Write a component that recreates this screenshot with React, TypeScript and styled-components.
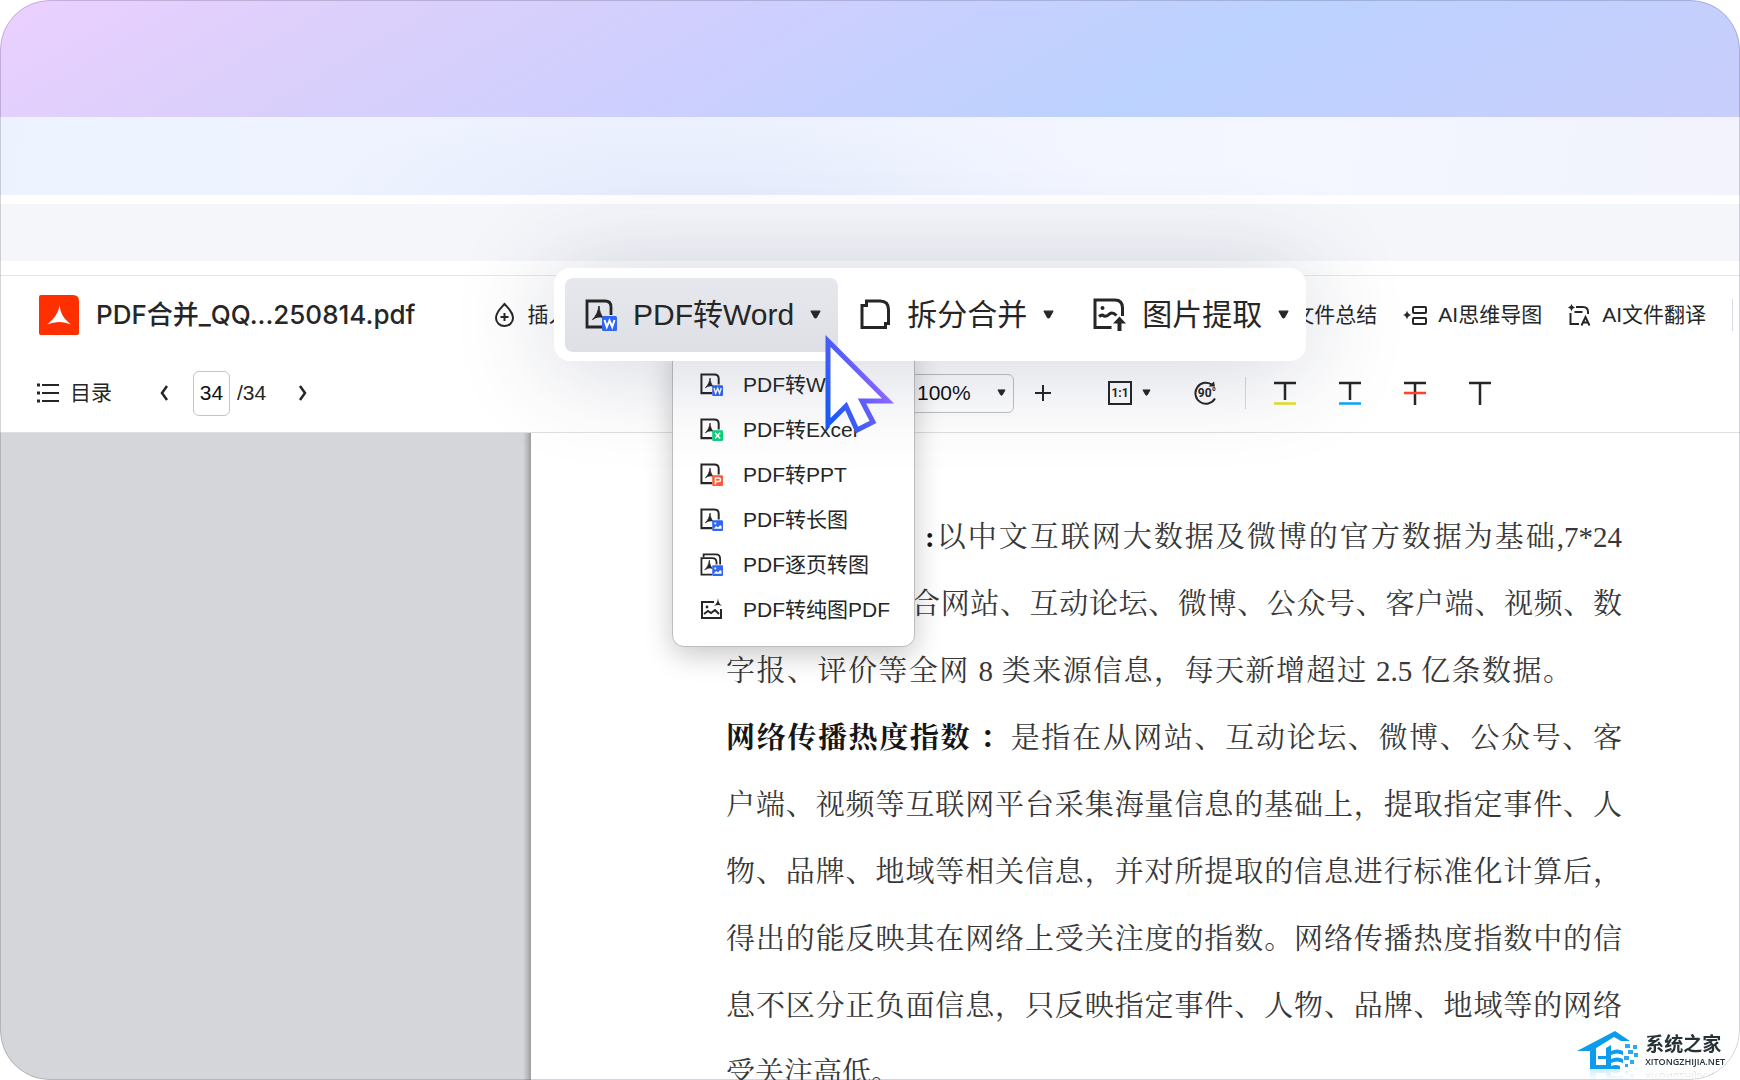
import React from "react";
import styled, { createGlobalStyle, css } from "styled-components";

const GlobalStyle = createGlobalStyle`
  *, *::before, *::after { box-sizing: border-box; }
  body { margin: 0; background: #fff; }
  button, input, select { font: inherit; color: inherit; }
`;

const sans = `"Liberation Sans", "Noto Sans CJK SC", sans-serif`;
const INK = "#262626";

const Frame = styled.div`
  position: relative;
  display: flex;
  flex-direction: column;
  height: 100vh;
  overflow: hidden;
  border-radius: 50px;
  background: #fff;
  color: ${INK};
  font-family: ${sans};
  font-size: 21px;
  line-height: 30px;

  &::after {
    content: "";
    position: absolute;
    inset: 0;
    border: 1px solid rgba(60, 60, 80, 0.22);
    border-radius: 50px;
    pointer-events: none;
  }
`;

const Sky = styled.div`
  flex: 0 0 117px;
  background: linear-gradient(150deg, #ebd0ff 0%, #dccffb 20%, #d0cffe 38%, #bcd2ff 67%, #c2d0fe 82%, #c9cefb 100%);
`;

const Band = styled.div`
  flex: 0 0 78px;
  background:
    radial-gradient(ellipse 400px 120px at 40% 110%, #e4ebfc, rgba(228, 235, 252, 0)),
    linear-gradient(100deg, #ecf3ff 0%, #f0f3ff 30%, #f4f7ff 75%, #f2f3fd 100%);
`;

const TabStrip = styled.div`
  flex: 0 0 57px;
  margin-top: 9px;
  background: #f5f6fa;
`;

const TitleBar = styled.header`
  display: flex;
  align-items: center;
  flex: 0 0 79px;
  margin-top: 14px;
  padding: 0 7px 0 39px;
  border-top: 1px solid #e6e6ea;
`;

const FileName = styled.h1`
  margin: 0 0 0 16px;
  font-family: Inter, "Noto Sans CJK SC", sans-serif;
  font-size: 26px;
  font-weight: 500;
  white-space: nowrap;
`;

const TextButton = styled.button`
  display: flex;
  align-items: center;
  gap: 10px;
  padding: 0;
  border: 0;
  background: none;
  white-space: nowrap;
`;

const InsertSlot = styled.div`
  margin-left: 79px;
`;

const AiTools = styled.nav`
  display: flex;
  align-items: center;
  gap: 26px;
  margin-left: auto;
`;

const Divider = styled.span`
  width: 1px;
  height: 32px;
  background: #d9dadf;
`;

const ToolBar = styled.div`
  display: flex;
  align-items: center;
  flex: 0 0 79px;
  padding-left: 36px;
  border-bottom: 1px solid #e0e0e2;
`;

const Pager = styled.div`
  display: flex;
  align-items: center;
  flex: 0 0 auto;
  margin-left: 47px;
`;

const PageInput = styled.input`
  width: 37px;
  height: 45px;
  margin: 0 7px 0 24px;
  padding: 0;
  border: 1px solid #c4c4c8;
  border-radius: 6px;
  background: #fff;
  color: #111;
  text-align: center;
`;

const PageTotal = styled.span`
  width: 56px;
`;

const ZoomBox = styled.div`
  position: relative;
  display: flex;
  align-items: center;
  margin-left: 560px;
`;

const ZoomSelect = styled.select`
  appearance: none;
  width: 146px;
  height: 39px;
  padding: 0 0 0 48px;
  border: 1px solid #bfc0c6;
  border-radius: 6px;
  background: transparent;
  color: #111;
`;

const SelectCaret = styled.span`
  position: absolute;
  right: 8px;
  display: flex;
  pointer-events: none;
`;

const ViewTools = styled.div<{ $gap: number }>`
  display: flex;
  align-items: center;
  margin-left: ${(p) => p.$gap}px;
`;

const IconButton = styled.button<{ $gap?: number }>`
  display: flex;
  align-items: center;
  gap: 10px;
  margin: 0 0 0 ${(p) => p.$gap ?? 0}px;
  padding: 0;
  border: 0;
  background: none;
`;

const MarkTools = styled.div`
  display: flex;
  align-items: center;
  gap: 43px;
  margin-left: 28px;
`;

const Workspace = styled.main`
  display: flex;
  flex: 1 1 0;
  min-height: 0;
`;

const Outline = styled.aside`
  flex: 0 0 531px;
  background: linear-gradient(to left, #9c9d9f 0, #bcbdc0 4px, #d5d6da 8px);
`;

const Paper = styled.article`
  flex: 1 1 0;
  min-width: 0;
  padding: 71px 118px 0 195px;
  color: #383838;
  font-family: "Liberation Serif", "Noto Serif CJK SC", "Noto Sans CJK SC", serif;
  font-size: 29px;
  font-weight: 400;
  line-height: 67px;
`;

const Line = styled.p<{ $from?: number; $to?: number; $loose?: boolean }>`
  margin: 0;
  padding: 0 ${(p) => p.$to ?? 0}px 0 ${(p) => p.$from ?? 0}px;
  white-space: nowrap;
  text-align-last: ${(p) => (p.$loose ? "left" : "justify")};

  b {
    color: #161616;
    font-weight: 700;
  }
`;

const floating = css`
  position: absolute;
  background: #fff;
`;

const Menu = styled.div`
  ${floating}
  top: 345px;
  left: 672px;
  display: flex;
  flex-direction: column;
  width: 243px;
  padding: 16px 0 14px;
  border: 1px solid #bdbdc0;
  border-radius: 12px;
  box-shadow: 0 8px 28px rgba(0, 0, 0, 0.22);
`;

const MenuItem = styled.button`
  display: flex;
  align-items: center;
  gap: 20px;
  height: 45px;
  padding: 0 0 0 27px;
  border: 0;
  background: none;
  white-space: nowrap;
`;

const Spotlight = styled.div`
  ${floating}
  top: 268px;
  left: 554px;
  display: flex;
  align-items: center;
  gap: 2px;
  height: 93px;
  padding-left: 11px;
  border-radius: 16px;
  box-shadow: 0 6px 100px rgba(40, 50, 90, 0.22);
`;

const SpotButton = styled.button<{ $active?: boolean }>`
  display: flex;
  align-items: center;
  gap: 16px;
  height: 74px;
  padding: 0 17px 0 20px;
  border: 0;
  border-radius: 8px;
  background: ${(p) => (p.$active ? "linear-gradient(#e7e8ed, #dfe0e6)" : "none")};
  font-size: 30px;
  white-space: nowrap;
`;

const Pointer = styled.svg`
  position: absolute;
  top: 330px;
  left: 820px;
`;

const Watermark = styled.div`
  position: absolute;
  right: 15px;
  bottom: 11px;
  display: flex;
  align-items: center;
  gap: 6px;
  -webkit-box-reflect: below 0 linear-gradient(transparent 70%, rgba(0, 0, 0, 0.2));
`;

const Brand = styled.div`
  display: flex;
  flex-direction: column;
  color: #263238;
`;

const BrandName = styled.strong`
  font-size: 19px;
  line-height: 24px;
`;

const BrandSite = styled.span`
  font-family: "Open Sans", sans-serif;
  font-size: 9px;
  font-weight: 600;
  line-height: 10px;
`;

const Caret = ({ size = 9 }: { size?: number }) => (
  <svg width={size} height={size - 1} viewBox="0 0 10 9" aria-hidden="true">
    <path d="M1 1h8L6 6.500Q5 7.800 4 6.500Z" fill={INK} stroke={INK} strokeWidth="1" strokeLinejoin="round" />
  </svg>
);

type Badge = "W" | "X" | "P" | "img";
const badgeColor: Record<Badge, string> = { W: "#2f66f6", X: "#0cd17c", P: "#fb5b3c", img: "#2f66f6" };

const PdfIcon = ({ size = 23, badge, stacked = false }: { size?: number; badge: Badge; stacked?: boolean }) => (
  <svg width={size} height={size} viewBox="0 0 32 32" fill="none" aria-hidden="true">
    {stacked ? (
      <g stroke={INK} strokeWidth="2.500">
        <path d="M5 6V2h17q6 0 6 6v8" />
        <path d="M17 30H2V7h15q6 0 6 6v3" />
      </g>
    ) : (
      <path d="M17 28H2V2h18q6 0 6 6v8" stroke={INK} strokeWidth="2.800" />
    )}
    <path
      transform={stacked ? "translate(-1 3)" : undefined}
      d="M14 7c.3 5 1.600 8.500 4 11.500-1.500-.5-2.500-.6-4-.5-2.200.1-4.300 1.100-6.500 2.600C11.500 16.500 13 13 14 7z"
      fill={INK}
      stroke={INK}
    />
    <rect x="17" y="17" width="15" height="15" rx="1.500" fill={badgeColor[badge]} />
    {badge === "W" && <path d="M19.500 21l2.300 7 2.700-6.500 2.700 6.500 2.300-7" stroke="#fff" strokeWidth="2" />}
    {badge === "X" && <path d="M21 20.500l7 8M28 20.500l-7 8" stroke="#fff" strokeWidth="2.200" />}
    {badge === "P" && <path d="M21.500 30v-9.200h4.300q2.700 0 2.700 2.500t-2.700 2.500h-4.300" stroke="#fff" strokeWidth="2" />}
    {badge === "img" && (
      <path d="M19 29l3.500-4 2.500 2 3-3.500 2 2V29zM20 20h2.500v2.500H20z" fill="#fff" />
    )}
  </svg>
);

const FlatPdfIcon = () => (
  <svg width="23" height="23" viewBox="0 0 23 23" fill="none" aria-hidden="true">
    <path d="M14 4H2v16h19v-9" stroke={INK} strokeWidth="2" />
    <path d="M4 16l4-3 3 2 4-3 4 4" stroke={INK} strokeWidth="2" />
    <circle cx="7" cy="9" r="1.400" fill={INK} />
    <path d="M18 0c.3 4 1.500 6 4 8-3-1.300-5-1.300-8 0 2.800-2.500 3.600-4.500 4-8z" fill={INK} />
  </svg>
);

const SplitIcon = () => (
  <svg width="31" height="31" viewBox="0 0 31 31" fill="none" aria-hidden="true">
    <path d="M6.500 2H20q8.500 0 8.500 8.500v14h-3v4H2V6.500h4.500z" stroke={INK} strokeWidth="3" />
  </svg>
);

const PictureIcon = () => (
  <svg width="33" height="33" viewBox="0 0 33 33" fill="none" aria-hidden="true">
    <path d="M18.500 29.500H2V2h20q7.500 0 7.500 8v8" stroke={INK} strokeWidth="3" />
    <path d="M6 18.500q3-2.500 5-.5 2.500 1 5.500-2 3-2.500 7 1.500" stroke={INK} strokeWidth="3" />
    <circle cx="9.500" cy="10" r="2" fill={INK} />
    <path d="M26.500 18.500l6.500 7h-4.500V33h-4v-7.500H20z" fill={INK} />
  </svg>
);

const FileLogo = () => (
  <svg width="41" height="40" viewBox="0 0 41 40" aria-hidden="true">
    <path d="M2 0h32q6 0 6 6v32q0 2-2 2H2q-2 0-2-2V2q0-2 2-2z" fill="#ff2f00" />
    <path d="M20.500 10c1 9 5 14.500 11.500 19.500-8-3.500-15-3.500-24 0C15 24 19.500 18 20.500 10z" fill="#fff" />
  </svg>
);

const DropIcon = () => (
  <svg width="23" height="26" viewBox="0 0 23 26" fill="none" stroke={INK} strokeWidth="2" aria-hidden="true">
    <path d="M10.500 2C14 6 19 10 19 16a8.500 8 0 0 1-17 0C2 10 7 6 10.500 2z" />
    <path d="M10.500 11v8M6.500 15h8" />
  </svg>
);

const MindMapIcon = () => (
  <svg width="25" height="21" viewBox="0 0 25 21" fill="none" aria-hidden="true">
    <path d="M4 5.500q.8 3.700 4.500 4.500-3.700.8-4.500 4.500-.8-3.700-4-4.500 3.200-.8 4-4.500z" fill={INK} />
    <g stroke={INK} strokeWidth="2">
      <rect x="10" y="2" width="13" height="6" rx="1" />
      <rect x="10" y="13" width="13" height="6" rx="1" />
    </g>
  </svg>
);

const TranslateIcon = () => (
  <svg width="24" height="23" viewBox="0 0 24 23" fill="none" aria-hidden="true">
    <path d="M3.500 0q.6 3 3.500 3.600-2.900.6-3.500 3.600Q2.900 4.200 0 3.600 2.900 3 3.500 0z" fill={INK} />
    <path d="M8 3h7q5 0 5 5v2M2.500 9v11H11M6.500 8h8" stroke={INK} strokeWidth="2" />
    <path d="M13.500 21.500L17.500 13l4 8.500M15 18.500h5" stroke={INK} strokeWidth="2" />
  </svg>
);

const ListIcon = () => (
  <svg width="24" height="20" viewBox="0 0 24 20" aria-hidden="true">
    <path d="M6 2h17M6 10h17M6 18h17" stroke={INK} strokeWidth="2" />
    <path d="M1 2h3M1 10h3M1 18h3" stroke={INK} strokeWidth="3" />
  </svg>
);

const Chevron = ({ right = false }: { right?: boolean }) => (
  <svg width="10" height="16" viewBox="0 0 10 16" fill="none" aria-hidden="true">
    <path d={right ? "M2 1l5 7-5 7" : "M8 1L3 8l5 7"} stroke={INK} strokeWidth="2.500" />
  </svg>
);

const PlusIcon = () => (
  <svg width="18" height="18" viewBox="0 0 18 18" aria-hidden="true">
    <path d="M9 1v16M1 9h16" stroke={INK} strokeWidth="2" />
  </svg>
);

const SvgText = styled.text`
  fill: ${INK};
  font-family: Roboto, sans-serif;
  font-weight: 700;
`;

const ActualSizeIcon = () => (
  <svg width="24" height="24" viewBox="0 0 24 24" fill="none" aria-hidden="true">
    <rect x="1" y="1" width="22" height="22" stroke={INK} strokeWidth="2" />
    <SvgText x="12" y="16" fontSize="12" textAnchor="middle">1:1</SvgText>
  </svg>
);

const RotateIcon = () => (
  <svg width="24" height="24" viewBox="0 0 24 24" fill="none" aria-hidden="true">
    <path d="M18.500 4A10.500 10.500 0 1 0 21 17.500" stroke={INK} strokeWidth="2" />
    <path d="M14.500 5.500h6.500l-1-5z" fill={INK} />
    <SvgText x="13" y="16" fontSize="12" textAnchor="middle">90°</SvgText>
  </svg>
);

const MarkIcon = ({ line, strike }: { line?: string; strike?: string }) => (
  <svg width="22" height="24" viewBox="0 0 22 24" aria-hidden="true">
    <path d={line ? "M0 2h22M11 2v17" : "M0 2h22M11 2v22"} stroke={INK} strokeWidth="2.500" />
    {line && <path d="M0 22.500h22" stroke={line} strokeWidth="2.500" />}
    {strike && <path d="M0 12h22" stroke={strike} strokeWidth="2.500" />}
  </svg>
);

const HouseLogo = () => (
  <svg width="62" height="38" viewBox="0 0 62 38" aria-hidden="true">
    <path d="M0 20L38 0l15 10h-9l-7-4-21 13-3 1z" fill="#0b9cec" />
    <path d="M13 20l6-3v17h10v-6h-8v-3h8v-8l5-3v6q6-3 12 0v4q-6-3-12 0v4q6-3 12 0v4q-6-3-12 0v3q5-2 9 0v3H13z" fill="#0b9cec" />
    <path d="M48 13h5v4h-5zM56 14h4v4h-4zM51 19h5v4h-5zM57 22h4v4h-4zM47 25h5v4h-5zM53 29h4v4h-4zM48 33h3v3h-3z" fill="#2aaaf0" />
  </svg>
);

const menuItems: { label: string; icon: React.ReactNode }[] = [
  { label: "PDF转Word", icon: <PdfIcon badge="W" /> },
  { label: "PDF转Excel", icon: <PdfIcon badge="X" /> },
  { label: "PDF转PPT", icon: <PdfIcon badge="P" /> },
  { label: "PDF转长图", icon: <PdfIcon badge="img" /> },
  { label: "PDF逐页转图", icon: <PdfIcon badge="img" stacked /> },
  { label: "PDF转纯图PDF", icon: <FlatPdfIcon /> },
];

export default function App() {
  return (
    <>
      <GlobalStyle />
      <Frame>
        <Sky />
        <Band />
        <TabStrip />
        <TitleBar>
          <FileLogo />
          <FileName>PDF合并_QQ...250814.pdf</FileName>
          <InsertSlot>
            <TextButton><DropIcon />插入</TextButton>
          </InsertSlot>
          <AiTools>
            <TextButton>AI文件总结</TextButton>
            <TextButton><MindMapIcon />AI思维导图</TextButton>
            <TextButton><TranslateIcon />AI文件翻译</TextButton>
            <Divider />
          </AiTools>
        </TitleBar>
        <ToolBar>
          <TextButton><ListIcon />目录</TextButton>
          <Pager>
            <IconButton aria-label="上一页"><Chevron /></IconButton>
            <PageInput aria-label="页码" defaultValue="34" />
            <PageTotal>/34</PageTotal>
            <IconButton $gap={5} aria-label="下一页"><Chevron right /></IconButton>
          </Pager>
          <ZoomBox>
            <ZoomSelect aria-label="缩放" defaultValue="100%">
              <option>100%</option>
            </ZoomSelect>
            <SelectCaret><Caret /></SelectCaret>
          </ZoomBox>
          <ViewTools $gap={20}>
            <IconButton aria-label="放大"><PlusIcon /></IconButton>
            <IconButton $gap={56} aria-label="实际大小"><ActualSizeIcon /><Caret /></IconButton>
            <IconButton $gap={43} aria-label="旋转"><RotateIcon /></IconButton>
          </ViewTools>
          <ViewTools $gap={27}>
            <Divider />
            <MarkTools>
              <IconButton aria-label="高亮"><MarkIcon line="#e3e122" /></IconButton>
              <IconButton aria-label="下划线"><MarkIcon line="#0aa5ff" /></IconButton>
              <IconButton aria-label="删除线"><MarkIcon strike="#ff4326" /></IconButton>
              <IconButton aria-label="文字"><MarkIcon /></IconButton>
            </MarkTools>
          </ViewTools>
        </ToolBar>
        <Workspace>
          <Outline />
          <Paper>
            <Line $from={199}><b>:</b>以中文互联网大数据及微博的官方数据为基础,7*24</Line>
            <Line $from={185}>合网站、互动论坛、微博、公众号、客户端、视频、数</Line>
            <Line $to={50}>字报、评价等全网 8 类来源信息，每天新增超过 2.5 亿条数据。</Line>
            <Line><b>网络传播热度指数 ：</b>是指在从网站、互动论坛、微博、公众号、客</Line>
            <Line>户端、视频等互联网平台采集海量信息的基础上，提取指定事件、人</Line>
            <Line>物、品牌、地域等相关信息，并对所提取的信息进行标准化计算后，</Line>
            <Line>得出的能反映其在网络上受关注度的指数。网络传播热度指数中的信</Line>
            <Line>息不区分正负面信息，只反映指定事件、人物、品牌、地域等的网络</Line>
            <Line $loose>受关注高低。</Line>
          </Paper>
        </Workspace>

        <Menu role="menu">
          {menuItems.map((item) => (
            <MenuItem key={item.label} role="menuitem">{item.icon}{item.label}</MenuItem>
          ))}
        </Menu>
        <Spotlight>
          <SpotButton $active><PdfIcon size={32} badge="W" />PDF转Word<Caret size={11} /></SpotButton>
          <SpotButton><SplitIcon />拆分合并<Caret size={11} /></SpotButton>
          <SpotButton><PictureIcon />图片提取<Caret size={11} /></SpotButton>
        </Spotlight>

        <Pointer width="80" height="108" viewBox="0 0 80 108" aria-hidden="true">
          <defs>
            <linearGradient id="pointerStroke" x1="0.1" y1="0.9" x2="0.9" y2="0.4">
              <stop offset="0" stopColor="#1c5af8" />
              <stop offset="0.400" stopColor="#4a5cf6" />
              <stop offset="1" stopColor="#9167ff" />
            </linearGradient>
          </defs>
          <path d="M8 11L68 71H42L53 92L37 100L26 76L8 94z" fill="#fff" stroke="url(#pointerStroke)" strokeWidth="5" />
        </Pointer>

        <Watermark>
          <HouseLogo />
          <Brand>
            <BrandName>系统之家</BrandName>
            <BrandSite>XITONGZHIJIA.NET</BrandSite>
          </Brand>
        </Watermark>
      </Frame>
    </>
  );
}
